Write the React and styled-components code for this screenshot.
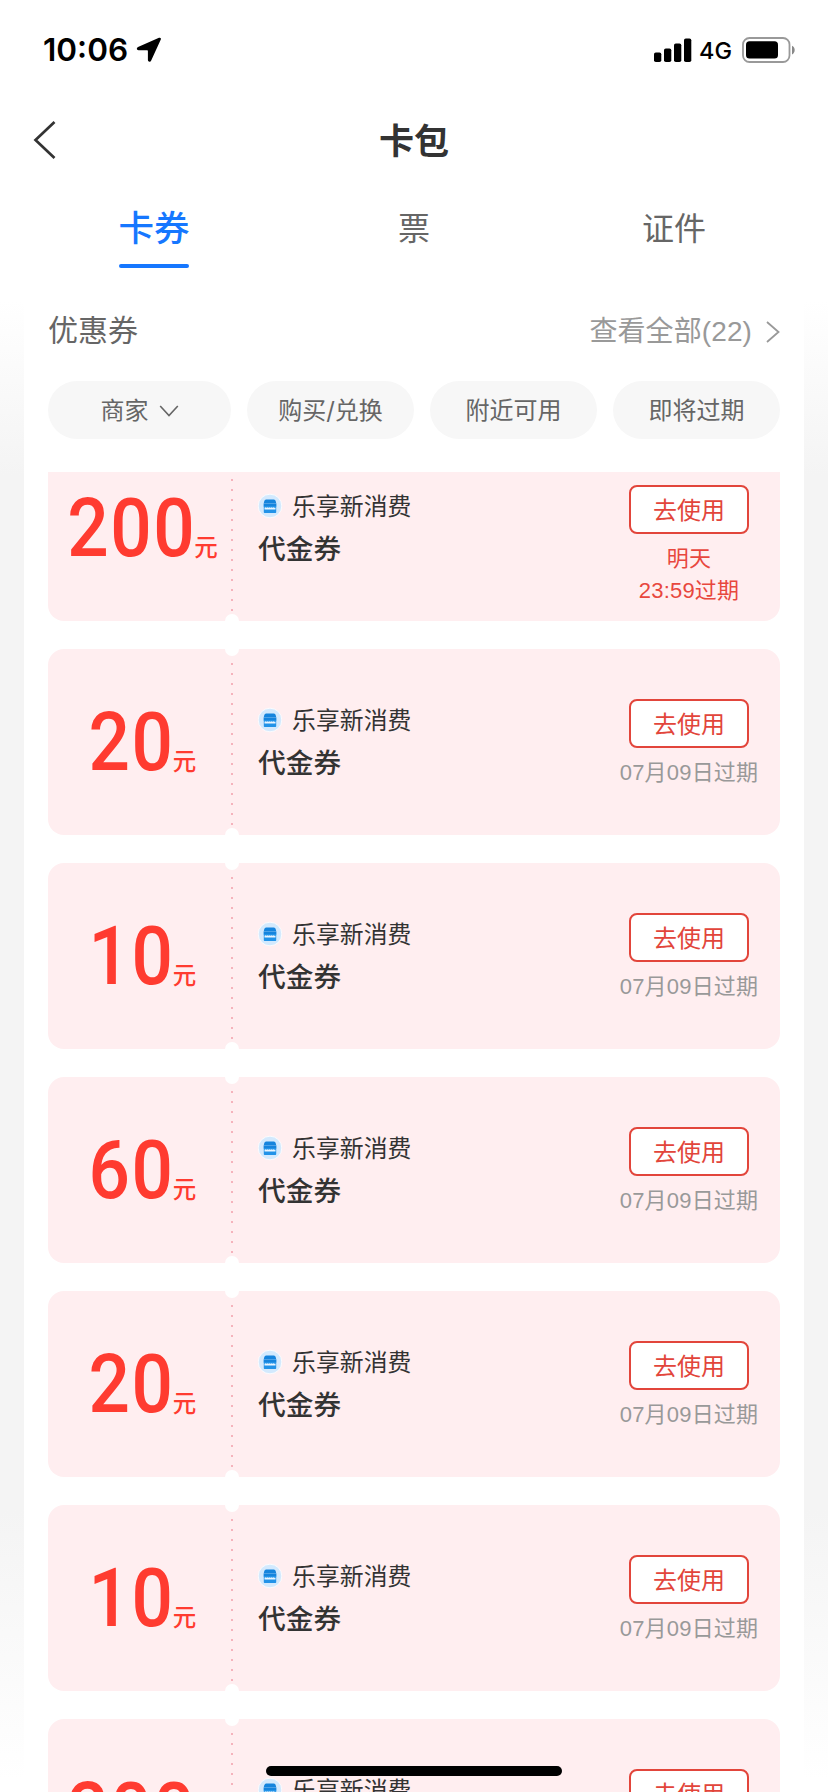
import React from "react";
import styled, { createGlobalStyle } from "styled-components";

const Global = createGlobalStyle`
  * { box-sizing: border-box; }
  body {
    margin: 0;
    background: #fff;
    font-family: "Liberation Sans", "Noto Sans CJK SC", sans-serif;
  }
`;

const Screen = styled.div`
  position: relative;
  width: 828px;
  height: 1792px;
  overflow: hidden;
  display: flex;
  flex-direction: column;
  background: #fff;
`;

const StatusBar = styled.header`
  height: 100px;
  padding: 0 32px 0 43px;
  display: flex;
  align-items: center;
`;

const Clock = styled.span`
  width: 93px;
  font: 600 31.5px/40px Inter, sans-serif;
  color: #000;
  white-space: nowrap;
`;

const StatusIcons = styled.div`
  margin-left: auto;
  display: flex;
  align-items: center;
`;

const Network = styled.span`
  width: 33px;
  margin: 2px 10px 0 7px;
  font: 500 23.5px/30px Inter, sans-serif;
  color: #000;
  white-space: nowrap;
`;

const NavBar = styled.nav`
  height: 80px;
  padding: 0 33px;
  display: grid;
  grid-template-columns: 60px 1fr 60px;
  align-items: center;
`;

const Title = styled.h1`
  margin: 0;
  padding-top: 3px;
  text-align: center;
  font-size: 35px;
  line-height: 50px;
  font-weight: 700;
  color: #333;
`;

const Tabs = styled.div`
  height: 120px;
  padding: 0 24px;
  display: grid;
  grid-template-columns: repeat(3, 1fr);
`;

const Tab = styled.div`
  display: flex;
  flex-direction: column;
  align-items: center;
  padding-top: 24px;
  font-size: ${(p) => (p.$active ? 35.5 : 32)}px;
  line-height: 50px;
  font-weight: ${(p) => (p.$active ? 500 : 400)};
  color: ${(p) => (p.$active ? "#1677ff" : "#666")};

  &::after {
    content: "";
    width: 70px;
    height: 4px;
    margin-top: 10px;
    border-radius: 2px;
    background: ${(p) => (p.$active ? "#1677ff" : "transparent")};
  }
`;

const Content = styled.main`
  flex: 1;
  min-height: 0;
  padding: 0 24px;
  background: linear-gradient(#fff 0, #f4f4f4 175px, #f4f4f4 1210px, #fff 1480px);
`;

const Panel = styled.section`
  height: 100%;
  padding: 0 24px;
  display: flex;
  flex-direction: column;
  background: #fff;
`;

const PanelHead = styled.div`
  height: 81px;
  padding-top: 11px;
  display: flex;
  justify-content: space-between;
  align-items: flex-start;
  line-height: 40px;
`;

const PanelTitle = styled.h2`
  margin: 0;
  font-size: 30px;
  font-weight: 400;
  line-height: 40px;
  color: #666;
`;

const ViewAll = styled.span`
  display: flex;
  align-items: center;
  gap: 14px;
  padding-top: 1px;
  font-size: 28px;
  letter-spacing: 0.1px;
  color: #999;
`;

const Filters = styled.div`
  height: 91px;
  display: grid;
  grid-template-columns: 183px 167px 167px 167px;
  gap: 16px;
  align-items: start;
`;

const Chip = styled.div`
  height: 58px;
  padding-top: 1px;
  border-radius: 29px;
  display: flex;
  align-items: center;
  justify-content: center;
  gap: 10px;
  background: #f7f7f7;
  color: #666;
  font-family: Inter, "Noto Sans CJK SC", sans-serif;
  font-size: 24px;
  line-height: 56px;
`;

const List = styled.div`
  flex: 1;
  min-height: 0;
  overflow: hidden;
`;

const Track = styled.div`
  margin-top: -37px;
  display: flex;
  flex-direction: column;
  gap: 28px;
`;

const Coupon = styled.article`
  position: relative;
  flex: none;
  height: 186px;
  border-radius: 16px;
  background: #ffeef0;
  display: grid;
  grid-template-columns: 190px 1fr 164px;
  padding: 0 9px 0 0;
`;

const Notch = styled.i`
  position: absolute;
  left: 177px;
  ${(p) => (p.$end ? "bottom" : "top")}: -7px;
  width: 14px;
  height: 14px;
  border-radius: 50%;
  background: #fff;
`;

const Perforation = styled.i`
  position: absolute;
  left: 183px;
  top: 14px;
  width: 2px;
  height: 162px;
  background: repeating-linear-gradient(#f5b3bc 0 2px, transparent 2px 10px);
`;

const Price = styled.div`
  display: flex;
  justify-content: center;
  align-items: baseline;
  padding: 46px 1px 0 0;
  color: #ff3b30;
`;

/* Digits are condensed; the margin takes back the width the transform frees. */
const Amount = styled.span`
  margin-left: ${(p) => p.$digits * -4.7}px;
  font: 500 81px/96px Roboto, sans-serif;
  letter-spacing: 1.7px;
  transform: scaleX(0.9);
  transform-origin: right center;
`;

const Unit = styled.span`
  margin-left: -2px;
  font-size: 23.5px;
  font-weight: 500;
`;

const Info = styled.div`
  padding: 54px 0 0 20px;
`;

const Merchant = styled.div`
  display: flex;
  align-items: center;
  gap: 10px;
  height: 34px;
  font-size: 23.9px;
  color: #333;
`;

const MerchantName = styled.span`
  padding-top: 2px;
  line-height: 34px;
`;

const Kind = styled.div`
  margin-top: 6px;
  font-size: 27.7px;
  line-height: 42px;
  font-weight: 500;
  color: #333;
`;

const Action = styled.div`
  display: flex;
  flex-direction: column;
  align-items: center;
  padding-top: 50px;
`;

const UseButton = styled.button`
  width: 120px;
  height: 49px;
  padding: 2px 0 0;
  border: 2px solid #e2453b;
  border-radius: 8px;
  background: #fff;
  color: #e2453b;
  font: inherit;
  font-size: 24px;
  line-height: 43px;
`;

const Expiry = styled.div`
  margin-top: 9px;
  text-align: center;
  font-size: 22px;
  letter-spacing: 0.2px;
  line-height: 32px;
  white-space: pre-line;
  color: ${(p) => (p.$urgent ? "#e8473e" : "#999")};
`;

const HomeIndicator = styled.div`
  position: absolute;
  left: 266px;
  top: 1766px;
  width: 296px;
  height: 10px;
  border-radius: 5px;
  background: #000;
`;

const LocationIcon = () => (
  <svg width="26" height="26" viewBox="0 0 26 26">
    <path d="M23 .8 2 10c-1.800.9-1.300 3.200.5 3.200h8.400c.7 0 1 .3 1 1v8.900c.1 2 2.500 2.400 3.300.5L24.800 2.500C25.300 1.100 24.400.3 23 .8Z" fill="#000" />
  </svg>
);

const SignalIcon = () => (
  <svg width="38" height="24" viewBox="0 0 38 24">
    <rect x="0" y="14.500" width="7.300" height="9.500" rx="1.800" />
    <rect x="10" y="10.500" width="7.300" height="13.500" rx="1.800" />
    <rect x="20" y="5.500" width="7.300" height="18.500" rx="1.800" />
    <rect x="30" y="0.500" width="7.300" height="23.500" rx="1.800" />
  </svg>
);

const BatteryIcon = () => (
  <svg width="54" height="26" viewBox="0 0 54 26">
    <rect x="1" y="1" width="46.500" height="24" rx="6.500" fill="none" stroke="#999" strokeWidth="1.800" />
    <rect x="4" y="4.300" width="32" height="17.200" rx="3.500" />
    <path d="M50 8.800c3.600 1.700 3.600 7 0 8.700Z" fill="#888" />
  </svg>
);

const BackIcon = () => (
  <svg width="24" height="38" viewBox="0 0 24 38">
    <path d="M21.500 1 2.500 19l19 18" fill="none" stroke="#333" strokeWidth="2.700" />
  </svg>
);

const DownIcon = () => (
  <svg width="20" height="14" viewBox="0 0 20 14">
    <path d="m1.200 2 8.800 9.500L18.800 2" fill="none" stroke="#666" strokeWidth="1.600" />
  </svg>
);

const RightIcon = () => (
  <svg width="14" height="24" viewBox="0 0 14 24">
    <path d="m1 2 11.500 10L1 22" fill="none" stroke="#999" strokeWidth="1.800" />
  </svg>
);

const ShopIcon = () => (
  <svg width="24" height="26" viewBox="0 0 24 26">
    <circle cx="12" cy="13" r="11.800" fill="#d3e9fd" stroke="#fff" strokeWidth="0.800" />
    <path d="M8.200 6.500h7.600c1.200 0 2 1.200 2.400 3.400H5.800c.4-2.200 1.200-3.400 2.400-3.400Z" fill="#1584dd" />
    <path d="M5.600 10.300h12.800v3.200H5.600z" fill="#1584dd" />
    <path d="M5.800 13h12.400v6c0 .6-.4 1-1 1H6.800c-.6 0-1-.4-1-1z" fill="#2293e8" />
    <path d="M6.500 14.800q1-1 2 0 1-1 2 0 1-1 2 0 1-1 2 0 1-1 2 0h1v1.700h-11v-1.700Z" fill="#e9f5ff" />
  </svg>
);

const coupons = [
  { amount: 200, expiry: "明天\n23:59过期", urgent: true },
  { amount: 20, expiry: "07月09日过期" },
  { amount: 10, expiry: "07月09日过期" },
  { amount: 60, expiry: "07月09日过期" },
  { amount: 20, expiry: "07月09日过期" },
  { amount: 10, expiry: "07月09日过期" },
  { amount: 200, expiry: "07月09日过期" },
];

export default function App() {
  return (
    <Screen>
      <Global />
      <StatusBar>
        <Clock>10:06</Clock>
        <LocationIcon />
        <StatusIcons>
          <SignalIcon />
          <Network>4G</Network>
          <BatteryIcon />
        </StatusIcons>
      </StatusBar>
      <NavBar>
        <BackIcon />
        <Title>卡包</Title>
      </NavBar>
      <Tabs>
        <Tab $active>卡券</Tab>
        <Tab>票</Tab>
        <Tab>证件</Tab>
      </Tabs>
      <Content>
        <Panel>
          <PanelHead>
            <PanelTitle>优惠券</PanelTitle>
            <ViewAll>
              查看全部(22)
              <RightIcon />
            </ViewAll>
          </PanelHead>
          <Filters>
            <Chip>
              商家
              <DownIcon />
            </Chip>
            <Chip>购买/兑换</Chip>
            <Chip>附近可用</Chip>
            <Chip>即将过期</Chip>
          </Filters>
          <List>
            <Track>
              {coupons.map((c, i) => (
                <Coupon key={i}>
                  <Price>
                    <Amount $digits={String(c.amount).length}>{c.amount}</Amount>
                    <Unit>元</Unit>
                  </Price>
                  <Info>
                    <Merchant>
                      <ShopIcon />
                      <MerchantName>乐享新消费</MerchantName>
                    </Merchant>
                    <Kind>代金券</Kind>
                  </Info>
                  <Action>
                    <UseButton>去使用</UseButton>
                    <Expiry $urgent={c.urgent}>{c.expiry}</Expiry>
                  </Action>
                  <Perforation />
                  <Notch />
                  <Notch $end />
                </Coupon>
              ))}
            </Track>
          </List>
        </Panel>
      </Content>
      <HomeIndicator />
    </Screen>
  );
}
